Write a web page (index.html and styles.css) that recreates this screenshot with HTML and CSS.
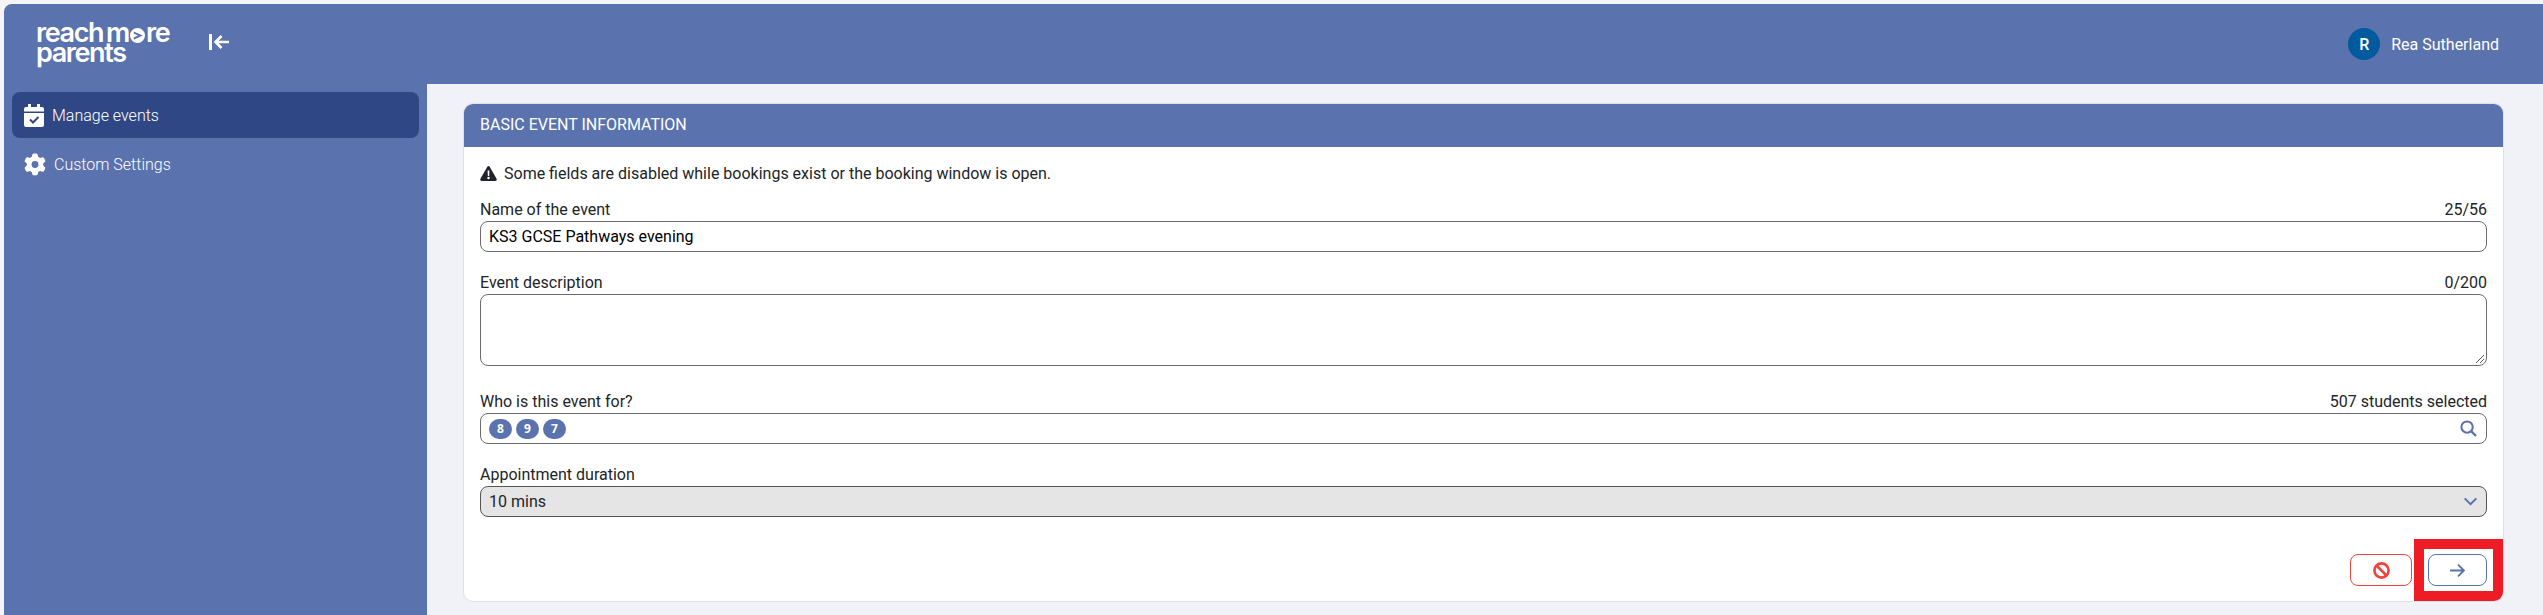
FILE: index.html
```html
<!DOCTYPE html>
<html lang="en">
<head>
    <meta charset="UTF-8">
    <meta name="viewport" content="width=device-width, initial-scale=1.0">
    <title>Manage events</title>
    <link rel="stylesheet" href="styles.css">
</head>
<body>
    <div class="app">
        <header class="topbar">
            <div class="brand">
                <div class="logo">
                    <div>reach m<svg class="logo-o" viewBox="0 0 20 20"><path fill="#fff" fill-rule="evenodd" d="M10 0a10 10 0 1 1 0 20 10 10 0 0 1 0-20zM5 4.500v2.800L10.500 10 5 12.700v2.800L17 10z"/></svg>re</div>
                    <div>parents</div>
                </div>
                <svg class="collapse" viewBox="0 0 20 18"><path d="M1.500 1v16" stroke-width="3"/><path d="M20 9H7M12.500 3 6.500 9l6 6" stroke-width="2.600"/></svg>
            </div>
            <div class="user">
                <span class="avatar">R</span>
                <span>Rea Sutherland</span>
            </div>
        </header>
        <div class="main">
            <nav class="sidebar">
                <a class="nav-item active">
                    <svg class="nav-icon" viewBox="0 0 20 23"><path fill="#fff" d="M4 0h3v3h6V0h3v3h2a2 2 0 0 1 2 2v2.500H0V5a2 2 0 0 1 2-2h2zM0 9h20v12a2 2 0 0 1-2 2H2a2 2 0 0 1-2-2z"/><path d="M6 15.500l3 3 5.500-5.500" fill="none" stroke="#2f4885" stroke-width="2"/></svg>
                    Manage events
                </a>
                <a class="nav-item">
                    <svg class="nav-icon gear" viewBox="0 0 512 512"><path fill="#fff" d="M495.900 166.600c3.200 8.700.5 18.400-6.400 24.600l-43.300 39.400c1.100 8.300 1.700 16.800 1.700 25.400s-.6 17.100-1.700 25.400l43.300 39.400c6.900 6.200 9.600 15.900 6.400 24.600-4.400 11.900-9.700 23.300-15.800 34.300l-4.700 8.100c-6.600 11-14 21.400-22.100 31.200-5.900 7.200-15.700 9.600-24.500 6.800l-55.700-17.700c-13.400 10.300-28.200 18.900-44 25.400l-12.500 57.100c-2 9.100-9 16.300-18.200 17.800-13.800 2.300-28 3.500-42.500 3.500s-28.700-1.200-42.500-3.500c-9.200-1.500-16.200-8.700-18.200-17.800l-12.500-57.100c-15.800-6.500-30.600-15.100-44-25.400l-55.600 17.800c-8.800 2.800-18.600.3-24.500-6.800-8.100-9.800-15.500-20.200-22.100-31.200l-4.700-8.100c-6.100-11-11.400-22.400-15.800-34.300-3.200-8.700-.5-18.400 6.400-24.600l43.300-39.400c-1.100-8.400-1.700-16.900-1.700-25.500s.6-17.100 1.700-25.400l-43.300-39.400c-6.900-6.200-9.600-15.900-6.400-24.600 4.400-11.900 9.700-23.300 15.800-34.300l4.700-8.100c6.600-11 14-21.400 22.100-31.200 5.900-7.200 15.700-9.600 24.500-6.800l55.700 17.700c13.400-10.300 28.200-18.900 44-25.400l12.500-57.100c2-9.100 9-16.300 18.200-17.800C227.300 1.200 241.500 0 256 0s28.700 1.200 42.500 3.500c9.200 1.500 16.200 8.700 18.200 17.800l12.500 57.100c15.800 6.500 30.600 15.100 44 25.400l55.700-17.700c8.800-2.800 18.600-.3 24.500 6.800 8.100 9.800 15.500 20.200 22.100 31.200l4.700 8.100c6.100 11 11.400 22.400 15.800 34.300zM256 336a80 80 0 1 0 0-160 80 80 0 1 0 0 160z"/></svg>
                    Custom Settings
                </a>
            </nav>
            <main class="content">
                <section class="card">
                    <h2 class="card-title">BASIC EVENT INFORMATION</h2>
                    <div class="card-body">
                        <p class="notice">
                            <svg class="warn" viewBox="0 0 20 18"><path fill="#212529" fill-rule="evenodd" d="M10 0c.600 0 1.100.300 1.400.800l8.300 14.600c.600 1.100-.100 2.600-1.400 2.600H1.700C.400 18-.300 16.500.300 15.400L8.600.800C8.900.300 9.400 0 10 0zM8.900 5.500l.300 6.500h1.600l.300-6.500zM10 13a1.500 1.500 0 1 0 0 3 1.500 1.500 0 0 0 0-3z"/></svg>
                            Some fields are disabled while bookings exist or the booking window is open.
                        </p>
                        <div class="field">
                            <div class="field-label"><span>Name of the event</span><span>25/56</span></div>
                            <div class="input">KS3 GCSE Pathways evening</div>
                        </div>
                        <div class="field field-wide">
                            <div class="field-label"><span>Event description</span><span>0/200</span></div>
                            <div class="input textarea">
                                <svg class="grip" viewBox="0 0 10 10"><path d="M9 1 1 9M9 5 5 9" stroke="#555" fill="none"/></svg>
                            </div>
                        </div>
                        <div class="field">
                            <div class="field-label"><span>Who is this event for?</span><span>507 students selected</span></div>
                            <div class="input picker">
                                <div class="chips"><span class="chip">8</span><span class="chip">9</span><span class="chip">7</span></div>
                                <svg class="field-icon" viewBox="0 0 18 18"><circle cx="7.500" cy="7.500" r="6" fill="none" stroke="#5a72ad" stroke-width="2.200"/><path d="M12 12l5 5" stroke="#5a72ad" stroke-width="2.400"/></svg>
                            </div>
                        </div>
                        <div class="field">
                            <div class="field-label"><span>Appointment duration</span></div>
                            <div class="input select">
                                <span>10 mins</span>
                                <svg class="chevron" viewBox="0 0 16 10"><path d="M1.500 1.500 8 8l6.500-6.500" fill="none" stroke="#5a72ad" stroke-width="2.200"/></svg>
                            </div>
                        </div>
                        <div class="actions">
                            <button class="btn btn-cancel">
                                <svg viewBox="0 0 18 18"><circle cx="9" cy="9" r="7.500" fill="none" stroke="#f0443c" stroke-width="2.800"/><path d="M3.500 3.500l11 11" stroke="#f0443c" stroke-width="2.800"/></svg>
                            </button>
                            <button class="btn btn-next">
                                <svg viewBox="0 0 16 14"><path d="M1 7h13M8.500 1.500 14 7l-5.500 5.500" fill="none" stroke="#5a72ad" stroke-width="1.800"/></svg>
                                <span class="highlight"></span>
                            </button>
                        </div>
                    </div>
                </section>
            </main>
        </div>
    </div>
</body>
</html>
```

FILE: styles.css
```css
* {
    margin: 0;
    padding: 0;
    box-sizing: border-box;
}

html, body {
    height: 100%;
    overflow: hidden;
}

body {
    padding: 4px 0 0 4px;
    background: #f5f5f5;
    font-family: Roboto, sans-serif;
    font-size: 16px;
    color: #212529;
}

.app {
    display: flex;
    flex-direction: column;
    height: 611px;
    background: #5a72ad;
    border-top-left-radius: 8px;
    overflow: hidden;
}

.topbar {
    display: flex;
    justify-content: space-between;
    align-items: center;
    height: 80px;
    flex-shrink: 0;
    padding: 0 44px 0 32px;
    color: #fff;
}

.brand {
    display: flex;
    align-items: center;
    gap: 40px;
}

.logo {
    font-family: Inter, sans-serif;
    font-weight: 600;
    font-size: 27px;
    line-height: 20px;
    letter-spacing: -1.400px;
    word-spacing: -2.500px;
    color: #fff;
    margin-top: -3px;
}

.logo-o {
    width: 15px;
    height: 15px;
    margin: 0 1px;
    vertical-align: -1px;
}

.collapse {
    width: 20px;
    height: 18px;
    stroke: #fff;
    fill: none;
    margin-bottom: 4px;
}

.user {
    display: flex;
    align-items: center;
    gap: 11px;
    font-size: 16px;
}

.avatar {
    display: flex;
    justify-content: center;
    align-items: center;
    width: 32px;
    height: 32px;
    border-radius: 50%;
    background: #005a9e;
    font-weight: 500;
}

.main {
    display: flex;
    flex: 1;
    min-height: 0;
}

.sidebar {
    width: 423px;
    flex-shrink: 0;
    padding: 8px 8px 0 8px;
}

.nav-item {
    display: flex;
    align-items: center;
    height: 46px;
    padding-left: 12px;
    margin-bottom: 3px;
    border-radius: 8px;
    color: #fff;
    font-size: 16px;
    font-weight: 300;
}

.nav-item.active {
    background: #2f4885;
}

.nav-icon {
    width: 20px;
    height: 23px;
    margin-right: 8px;
}

.nav-icon.gear {
    width: 22px;
    height: 23px;
    margin-right: 8px;
}

.content {
    flex: 1;
    padding: 19px 39px 0 36px;
    background: #f1f2f7;
}

.card {
    height: 499px;
    background: #fff;
    border: 1px solid #dfe0e6;
    border-radius: 10px;
    overflow: hidden;
}

.card-title {
    height: 43px;
    line-height: 41px;
    padding-left: 16px;
    background: #5a72ad;
    color: #fff;
    font-size: 16px;
    font-weight: 400;
}

.card-body {
    padding: 0 16px;
}

.notice {
    display: flex;
    align-items: center;
    gap: 7px;
    height: 53px;
    font-size: 16px;
}

.warn {
    width: 17px;
    height: 15px;
}

.field {
    margin-bottom: 21px;
}

.field-wide {
    margin-bottom: 26px;
}

.field-label {
    display: flex;
    justify-content: space-between;
    height: 21px;
    line-height: 20px;
    font-size: 16px;
}

.input {
    position: relative;
    display: flex;
    align-items: center;
    justify-content: space-between;
    height: 31px;
    padding: 0 8px;
    background: #fff;
    border: 1px solid #6b6b6b;
    border-radius: 8px;
    font-size: 16px;
    color: #000;
}

.textarea {
    height: 72px;
}

.grip {
    position: absolute;
    right: 1px;
    bottom: 1px;
    width: 10px;
    height: 10px;
}

.chips {
    display: flex;
    gap: 4px;
}

.chip {
    display: flex;
    justify-content: center;
    align-items: center;
    width: 23px;
    height: 20px;
    border-radius: 10px;
    background: #5a72ad;
    color: #fff;
    font-family: "Open Sans", sans-serif;
    font-size: 12px;
    font-weight: 700;
}

.field-icon {
    width: 17px;
    height: 17px;
    margin-right: 1px;
}

.select {
    background: #e5e5e5;
    border-color: #555;
    color: #212529;
}

.chevron {
    width: 15px;
    height: 9px;
}

.actions {
    display: flex;
    justify-content: flex-end;
    gap: 16px;
    margin-top: 37px;
}

.btn {
    position: relative;
    display: flex;
    justify-content: center;
    align-items: center;
    height: 32px;
    background: #fff;
    border-radius: 8px;
    border: 1px solid;
}

.btn-cancel {
    width: 62px;
    border-color: #f0443c;
}

.btn-cancel svg {
    width: 17px;
    height: 17px;
}

.btn-next {
    width: 59px;
    border-color: #5a72ad;
}

.btn-next svg {
    width: 17px;
    height: 15px;
}

/* annotation box round the next button */
.highlight {
    position: absolute;
    top: -16px;
    left: -15px;
    width: 89px;
    height: 62px;
    border: 10px solid #ee1c25;
}
```
